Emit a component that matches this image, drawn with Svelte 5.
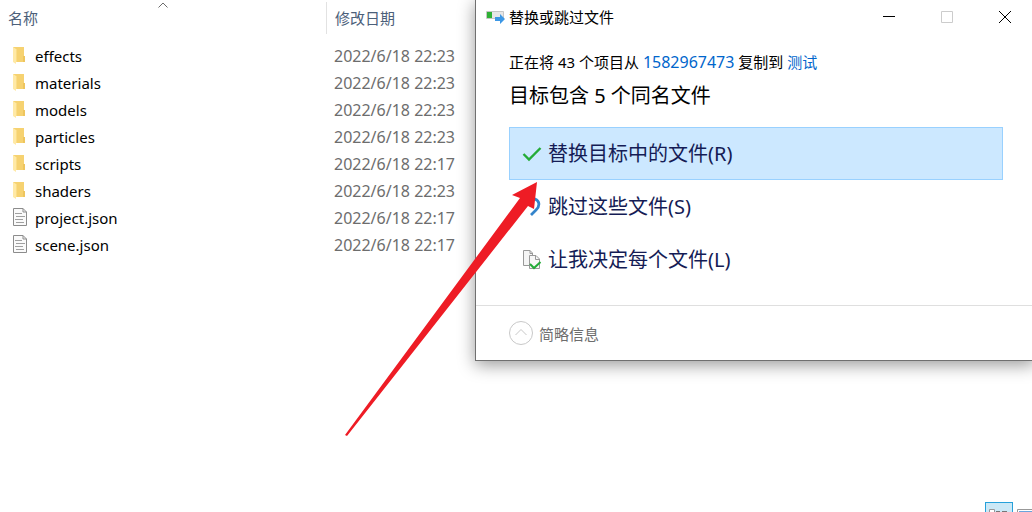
<script>
    const files = [
        { name: 'effects', date: '2022/6/18 22:23', folder: true },
        { name: 'materials', date: '2022/6/18 22:23', folder: true },
        { name: 'models', date: '2022/6/18 22:23', folder: true },
        { name: 'particles', date: '2022/6/18 22:23', folder: true },
        { name: 'scripts', date: '2022/6/18 22:17', folder: true },
        { name: 'shaders', date: '2022/6/18 22:23', folder: true },
        { name: 'project.json', date: '2022/6/18 22:17', folder: false },
        { name: 'scene.json', date: '2022/6/18 22:17', folder: false },
    ]

    const choices = [
        { id: 'replace', label: '替换目标中的文件(R)' },
        { id: 'skip', label: '跳过这些文件(S)' },
        { id: 'decide', label: '让我决定每个文件(L)' },
    ]

    let selected = $state('replace')
</script>

<div class="explorer">
    <table class="files">
        <thead>
            <tr>
                <th class="name-col">
                    <div class="head divided">
                        名称
                        <svg class="sort" width="10" height="6" viewBox="0 0 10 6">
                            <path d="M0.5 5.5L5 1L9.5 5.5" fill="none" stroke="#6b6b6b" />
                        </svg>
                    </div>
                </th>
                <th><div class="head">修改日期</div></th>
            </tr>
        </thead>
        <tbody>
            {#each files as file}
                <tr>
                    <td>
                        <div class="file">
                            {#if file.folder}
                                <svg width="16" height="22" viewBox="0 0 16 22">
                                    <path d="M1 1H12V10H13V16H4Z" fill="#f6d271" />
                                    <path d="M11 10H13V16H11Z" fill="#eec55e" />
                                    <path d="M1 1L4 3V18L1 16Z" fill="#ffe9a6" />
                                    <path d="M4 3H5V16H4Z" fill="#fadd87" />
                                </svg>
                            {:else}
                                <svg width="16" height="22" viewBox="0 0 16 22">
                                    <path d="M1.5 0.5H11L14.5 4V17.5H1.5Z" fill="#fafafa" stroke="#8c8c8c" />
                                    <path d="M11 0.5V4H14.5" fill="none" stroke="#8c8c8c" />
                                    <path d="M3 5.5H10M4 8.5H13M3 11.5H11M4 14.5H12" stroke="#a0a0a0" />
                                </svg>
                            {/if}
                            <span>{file.name}</span>
                        </div>
                    </td>
                    <td class="date">{file.date}</td>
                </tr>
            {/each}
        </tbody>
    </table>

    <div class="views">
        <button class="view active" aria-label="详细信息">
            <svg width="20" height="14" viewBox="0 0 20 14">
                <path d="M0.5 0.5H5.5V5.5H0.5Z" fill="#fff" stroke="#989898" />
                <path d="M2 3H4V6H2Z" fill="#6aa5dd" />
                <path d="M7 2.5H11M13 2.5H18" stroke="#777" />
            </svg>
        </button>
        <button class="view" aria-label="大图标">
            <svg width="20" height="14" viewBox="0 0 20 14">
                <path d="M0.5 0.5H18.5V12.5H0.5Z" fill="#fff" stroke="#989898" />
                <path d="M2 2H17V11H2Z" fill="#6aa5dd" />
            </svg>
        </button>
    </div>
</div>

<section class="dialog" aria-label="替换或跳过文件">
    <header>
        <svg width="20" height="16" viewBox="0 0 20 16">
            <path d="M0.5 2.5H17.5V9.5H0.5Z" fill="#e6e6e6" stroke="#c6c6c6" />
            <path d="M1 3H6V9H1Z" fill="#2fb135" />
            <path d="M9 8H14V5L19 10L14 15V12H9Z" fill="#3c97e5" />
        </svg>
        <span class="title">替换或跳过文件</span>
        <button class="control" aria-label="最小化">
            <svg width="12" height="12" viewBox="0 0 12 12"><path d="M0 5.5H12" stroke="#000" /></svg>
        </button>
        <button class="control" aria-label="最大化" disabled>
            <svg width="12" height="12" viewBox="0 0 12 12">
                <path d="M0.5 0.5H11.5V11.5H0.5Z" fill="none" stroke="#ccc" />
            </svg>
        </button>
        <button class="control" aria-label="关闭">
            <svg width="12" height="12" viewBox="0 0 12 12"><path d="M0 0L12 12M12 0L0 12" stroke="#000" /></svg>
        </button>
    </header>

    <div class="content">
        <p class="summary">正在将 43 个项目从 <a class="source" href="#source">1582967473</a> 复制到 <a href="#target">测试</a></p>
        <h1>目标包含 5 个同名文件</h1>

        {#each choices as choice}
            <button class="choice" class:selected={selected === choice.id} onclick={() => (selected = choice.id)}>
                <svg width="20" height="20" viewBox="0 0 20 20">
                    {#if choice.id === 'replace'}
                        <path d="M1.5 10L7 15.5L18.5 4" fill="none" stroke="#23ab37" stroke-width="2.4" />
                    {:else if choice.id === 'skip'}
                        <path d="M4 8C5 3 9 0 13 2C18 4 18 9 14 13L9 18" fill="none" stroke="#3484cb" stroke-width="2.8" />
                    {:else}
                        <path d="M1.5 0.5H8L10.5 3V15.5H1.5Z" fill="#f5f5f5" stroke="#999" />
                        <path d="M7.5 5.5H14L17.5 9V18.5H7.5Z" fill="#f7f7f7" stroke="#999" />
                        <path d="M8 0.5V3.5H10.5M13.5 5.5V9.5H17.5" fill="none" stroke="#999" />
                        <path d="M8 14L12 18L18.5 12" fill="none" stroke="#23ab37" stroke-width="2" />
                    {/if}
                </svg>
                {choice.label}
            </button>
        {/each}
    </div>

    <footer>
        <button class="details">
            <svg width="24" height="24" viewBox="0 0 24 24">
                <circle cx="12" cy="12" r="11.5" fill="none" stroke="#c8c8c8" />
                <path d="M6.5 14L12 8.5L17.5 14" fill="none" stroke="#c8c8c8" />
            </svg>
            简略信息
        </button>
    </footer>
</section>

<svg class="arrow" width="194" height="256" viewBox="0 0 194 256">
    <path d="M192 1L167 14L175 17L0 254L2 255L183 25L189 28Z" fill="#ee1c25" />
</svg>

<style>
    :global(body) {
        overflow: hidden;
        background: #fff;
        font-family: "Noto Sans", "Noto Sans CJK SC", sans-serif;
        font-size: 15px;
    }

    button {
        padding: 0;
        border: none;
        background: transparent;
        color: inherit;
        font: inherit;
    }

    svg {
        flex: none;
    }

    .explorer {
        display: flex;
        flex-direction: column;
        justify-content: space-between;
        height: 100vh;
    }

    .files {
        width: 100%;
        table-layout: fixed;
        border-collapse: collapse;
    }

    th {
        height: 43px;
        padding: 0;
        vertical-align: top;
        color: #4c607a;
        font-weight: 400;
        text-align: left;
    }

    .name-col {
        width: 327px;
    }

    .head {
        position: relative;
        height: 32px;
        margin-top: 2px;
        padding-left: 8px;
        line-height: 32px;
    }

    .divided {
        border-right: 1px solid #e2e2e2;
    }

    .sort {
        position: absolute;
        top: 0;
        left: calc(50% - 5px);
    }

    td {
        height: 27px;
        padding: 0;
        line-height: 27px;
    }

    .file {
        display: flex;
        gap: 7px;
        align-items: center;
        height: 27px;
        padding-left: 12px;
    }

    .date {
        padding-left: 7px;
        color: #6d6d6d;
        font-size: 16px;
    }

    .views {
        display: flex;
        flex: none;
        justify-content: flex-end;
        height: 10px;
        overflow: hidden;
    }

    .view {
        display: flex;
        justify-content: center;
        width: 28px;
        height: 24px;
        padding-top: 6px;
        border: 1px solid transparent;
    }

    .view.active {
        border-color: #26a0da;
        background: #cbe8f6;
    }

    .view:last-child {
        margin-right: -9px;
    }

    .dialog {
        position: absolute;
        top: -1px;
        right: -3px;
        left: 475px;
        border: 1px solid #707070;
        background: #fff;
        box-shadow: 0 4px 16px rgba(0, 0, 0, 0.4);
    }

    header {
        display: flex;
        align-items: center;
        height: 34px;
        padding-left: 10px;
    }

    .title {
        flex: 1;
        padding: 0 0 2px 3px;
    }

    .control {
        display: flex;
        align-items: center;
        justify-content: center;
        width: 58px;
        height: 34px;
    }

    .content {
        padding: 16px 31px 19px 33px;
    }

    .summary {
        margin: 0;
        line-height: 24px;
    }

    .summary a {
        color: #0066cc;
        text-decoration: none;
    }

    .summary .source {
        font-size: 16px;
    }

    h1 {
        margin: 8px 0 17px;
        font-size: 20px;
        font-weight: 400;
        line-height: 28px;
    }

    .choice {
        display: flex;
        gap: 6px;
        align-items: center;
        width: 100%;
        height: 53px;
        padding-left: 12px;
        border: 1px solid transparent;
        color: #151c55;
        font-size: 20px;
        line-height: 28px;
    }

    .choice.selected {
        border-color: #99d1ff;
        background: #cce8ff;
    }

    footer {
        padding: 15px 33px;
        border-top: 1px solid #dfdfdf;
    }

    .details {
        display: flex;
        gap: 6px;
        align-items: center;
        height: 24px;
        color: #6d6d6d;
    }

    .arrow {
        position: absolute;
        top: 181px;
        left: 345px;
        pointer-events: none;
    }
</style>
